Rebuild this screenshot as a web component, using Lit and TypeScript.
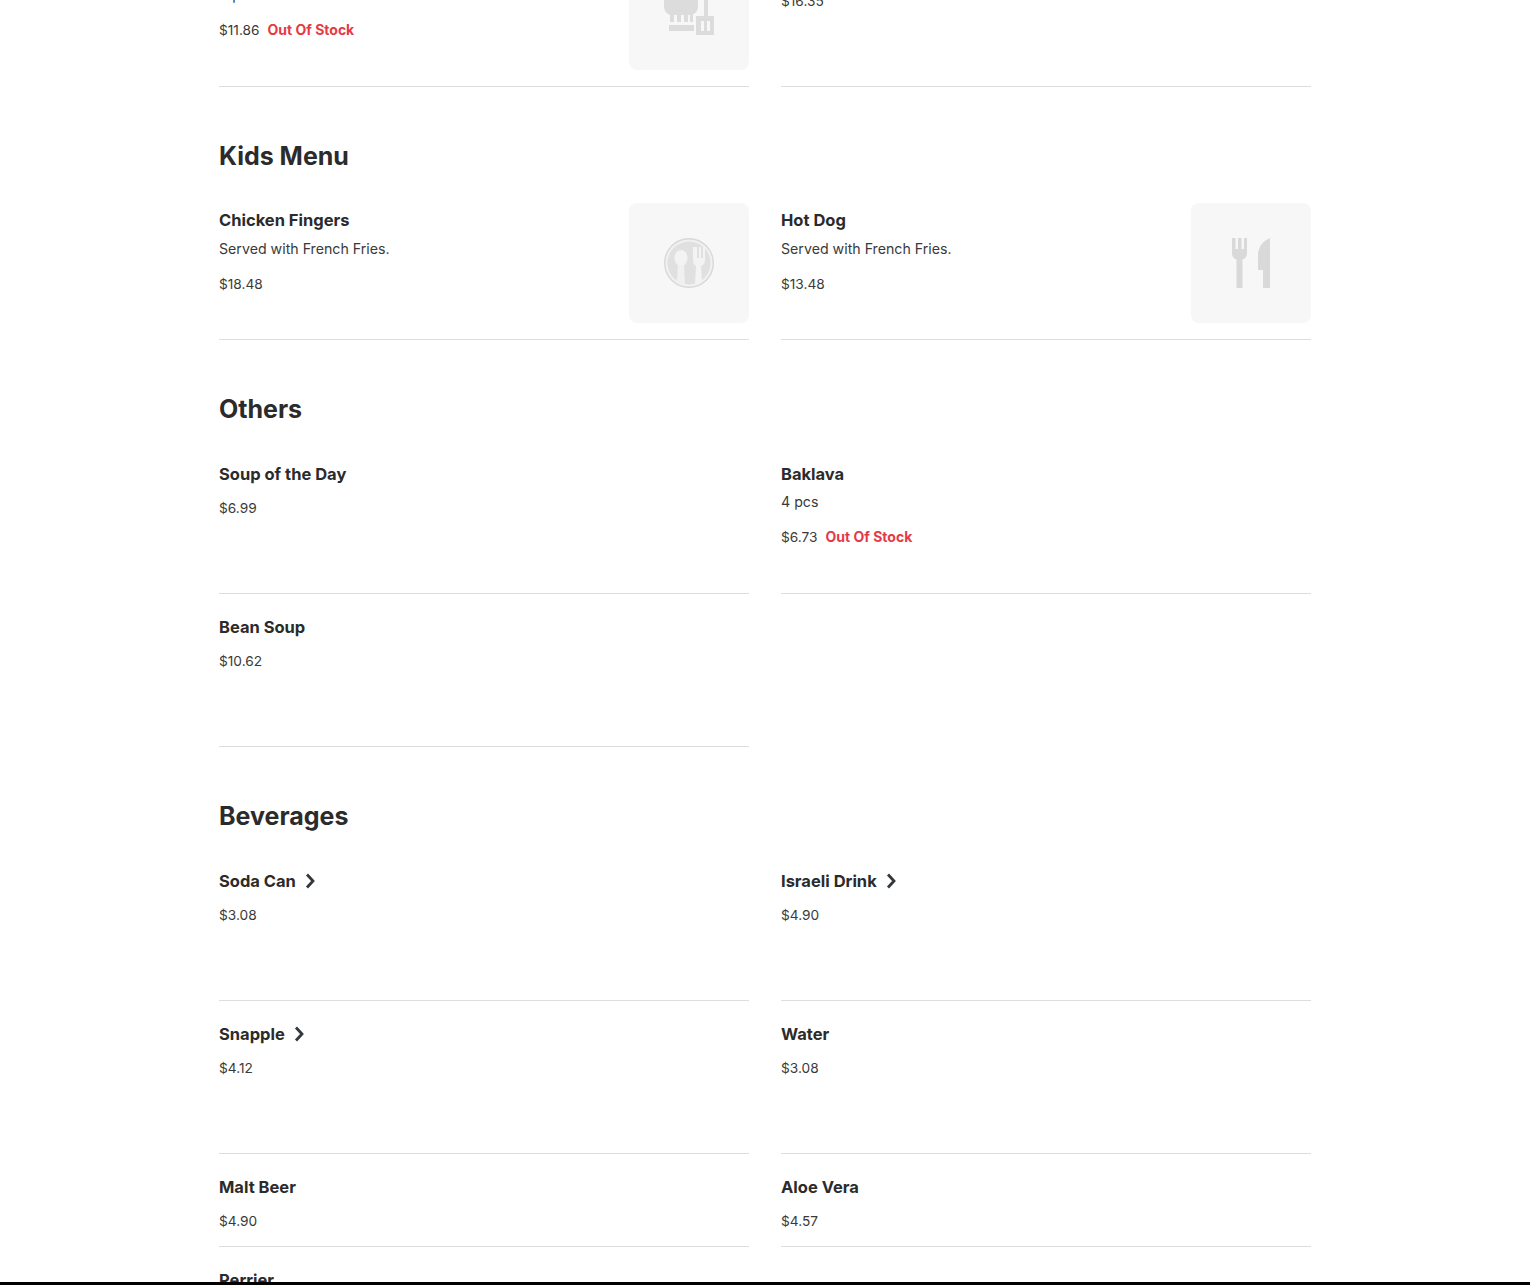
import { LitElement, html, css, svg } from "lit";
import { customElement } from "lit/decorators.js";

type Item = { name: string; desc?: string; price: string; oos?: boolean; arrow?: boolean; icon?: "chef" | "plate" | "cutlery"; short?: boolean };

const chef = svg`<svg viewBox="0 0 50 50" width="50" height="50" fill="#dcdcdc"><path d="M0 10a9 9 0 0 1 8-9h19a8 8 0 0 1 7 9v12q0 5-6 8H6q-6-3-6-8z"/><path d="M6 30h4v7H6zM13 30h4v7h-4zM20 30h4v7h-4zM26 30h3v7h-3z"/><rect x="5" y="40" width="25" height="6"/><rect x="40" y="0" width="4" height="32"/><path d="M32 31h18v19H32z"/><rect x="37" y="36" width="3" height="10" fill="#f7f7f7"/><rect x="43" y="36" width="3" height="10" fill="#f7f7f7"/></svg>`;
const plate = svg`<svg viewBox="0 0 50 50" width="50" height="50"><circle cx="25" cy="25" r="24.300" fill="#f1f1f1" stroke="#d8d8d8" stroke-width="1.400"/><circle cx="25" cy="25" r="21.500" fill="#e0e0e0"/><ellipse cx="17" cy="20" rx="6.500" ry="8" fill="#f3f3f3"/><path d="M14 27h6l1 19q-4-1-8-3z" fill="#f0f0f0"/><path d="M29 9v13q0 5 3 6l-1 18 7-2-1-16q4-1 4-6V9h-2v11h-2V9h-2v11h-2V9z" fill="#f3f3f3"/></svg>`;
const cutlery = svg`<svg viewBox="0 0 40 50" width="40" height="50" fill="#d9d9d9"><path d="M1 0h3.500v11H7V0h3.500v11H13V0h3v15q0 5-4.500 6.500V50H5.500V21.500Q1 20 1 15z"/><path d="M39 0v50h-7V32h-5V18Q27 5 39 0z"/></svg>`;

const sections: { title?: string; items: Item[] }[] = [
  {
    items: [
      { name: "Chef's Special", desc: "4 pcs", price: "$11.86", oos: true, icon: "chef" },
      { name: "Chef's Plate", price: "$16.35" },
    ],
  },
  {
    title: "Kids Menu",
    items: [
      { name: "Chicken Fingers", desc: "Served with French Fries.", price: "$18.48", icon: "plate" },
      { name: "Hot Dog", desc: "Served with French Fries.", price: "$13.48", icon: "cutlery" },
    ],
  },
  {
    title: "Others",
    items: [
      { name: "Soup of the Day", price: "$6.99" },
      { name: "Baklava", desc: "4 pcs", price: "$6.73", oos: true },
      { name: "Bean Soup", price: "$10.62" },
    ],
  },
  {
    title: "Beverages",
    items: [
      { name: "Soda Can", price: "$3.08", arrow: true },
      { name: "Israeli Drink", price: "$4.90", arrow: true },
      { name: "Snapple", price: "$4.12", arrow: true },
      { name: "Water", price: "$3.08" },
      { name: "Malt Beer", price: "$4.90", short: true },
      { name: "Aloe Vera", price: "$4.57", short: true },
      { name: "Perrier", price: "$3.08", short: true },
    ],
  },
];

const icons = { chef, plate, cutlery };

@customElement("app-root")
export class AppRoot extends LitElement {
  static styles = css`
    :host {
      display: block;
      position: relative;
      height: 1285px;
      overflow: hidden;
      background: #fff;
      font-family: Inter, "Noto Sans", sans-serif;
      color: #2b2b2b;
    }
    .menu {
      width: 1092px;
      margin: -50.5px auto 0;
    }
    h2 {
      margin: 51.2px 0 29.5px;
      font-size: 25px;
      line-height: 36px;
      font-weight: 700;
      color: #2b2b2b;
    }
    .grid {
      display: grid;
      grid-template-columns: 530px 530px;
      column-gap: 32px;
      row-gap: 16px;
    }
    .item {
      display: flex;
      justify-content: space-between;
      min-height: 120px;
      padding-bottom: 16px;
      border-bottom: 1px solid #dedede;
    }
    .item.short {
      min-height: 60px;
    }
    .name {
      display: flex;
      align-items: center;
      gap: 9px;
      margin-top: 5px;
      height: 24px;
      font-size: 16.5px;
      font-weight: 700;
      color: #2b2b2b;
    }
    .desc {
      margin-top: 5.5px;
      font-size: 14.2px;
      line-height: 21px;
      color: #3a3a3a;
    }
    .price {
      display: flex;
      gap: 8px;
      margin-top: 13px;
      font-size: 13.7px;
      line-height: 18px;
      color: #3a3a3a;
    }
    .desc + .price {
      margin-top: 16px;
    }
    .oos {
      font-size: 14px;
      font-weight: 700;
      color: #e63946;
    }
    .thumb {
      flex: none;
      display: flex;
      align-items: center;
      justify-content: center;
      width: 120px;
      height: 120px;
      border-radius: 8px;
      background: #f7f7f7;
    }
    .bar {
      position: absolute;
      left: 0;
      right: 0;
      bottom: 0;
      height: 3px;
      background: #000;
    }
  `;

  private renderItem(it: Item) {
    return html`<div class="item ${it.short ? "short" : ""}">
      <div>
        <div class="name">
          ${it.name}
          ${it.arrow
            ? html`<svg width="10" height="16" viewBox="0 0 10 16" fill="none" stroke="#33383d" stroke-width="2.800"><path d="M2 1.500 8 8l-6 6.500"/></svg>`
            : ""}
        </div>
        ${it.desc ? html`<div class="desc">${it.desc}</div>` : ""}
        <div class="price">
          <span>${it.price}</span>
          ${it.oos ? html`<span class="oos">Out Of Stock</span>` : ""}
        </div>
      </div>
      ${it.icon ? html`<div class="thumb">${icons[it.icon]}</div>` : ""}
    </div>`;
  }

  render() {
    return html`<div class="menu">
        ${sections.map(
          (s) => html`${s.title ? html`<h2>${s.title}</h2>` : ""}
            <div class="grid">${s.items.map((i) => this.renderItem(i))}</div>`
        )}
      </div>
      <div class="bar"></div>`;
  }
}
